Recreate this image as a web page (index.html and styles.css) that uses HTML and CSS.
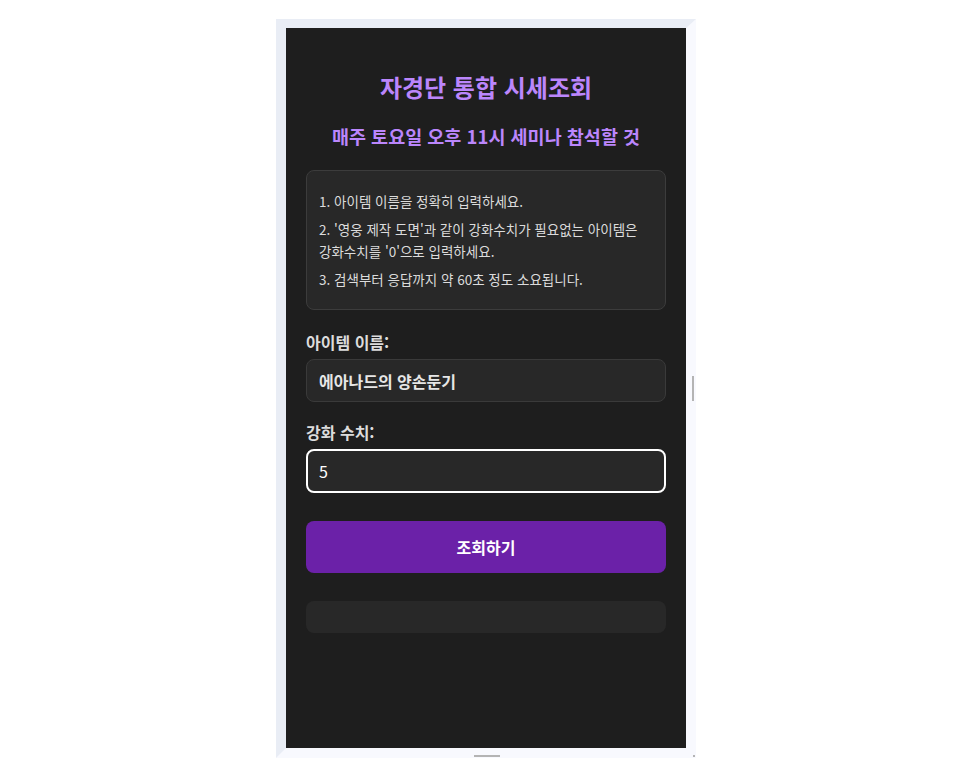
FILE: index.html
```html
<!DOCTYPE html>
<html lang="ko">
<head>
    <meta charset="UTF-8">
    <meta name="viewport" content="width=device-width, initial-scale=1.0">
    <title>자경단 통합 시세조회</title>
    <link rel="stylesheet" href="styles.css">
</head>
<body>

<div class="frame">
    <div class="app">
        <h1 class="title">자경단 통합 시세조회</h1>
        <h2 class="subtitle">매주 토요일 오후 11시 세미나 참석할 것</h2>

        <!-- 안내 문구 -->
        <div class="notice">
            <p>1. 아이템 이름을 정확히 입력하세요.</p>
            <p>2. '영웅 제작 도면'과 같이 강화수치가 필요없는 아이템은 강화수치를 '0'으로 입력하세요.</p>
            <p>3. 검색부터 응답까지 약 60초 정도 소요됩니다.</p>
        </div>

        <div class="form-group">
            <label for="item-name">아이템 이름:</label>
            <input type="text" id="item-name" class="field bold" value="에아나드의 양손둔기">
        </div>

        <div class="form-group">
            <label for="enhance">강화 수치:</label>
            <input type="text" id="enhance" class="field focused" value="5" autofocus>
        </div>

        <button class="search-btn">조회하기</button>

        <div class="result"></div>
    </div>
    <span class="handle handle-right"></span>
    <span class="handle handle-bottom"></span>
    <span class="handle handle-corner"></span>
</div>

</body>
</html>
```

FILE: styles.css
```css
body {
    font-family: "Noto Sans CJK KR", "Noto Sans", sans-serif;
    margin: 0;
    background: #fff;
}

.frame {
    position: relative;
    width: 400px;
    margin: 19px 0 0 276px;
    border-top: 9px solid #e9edf5;
    border-left: 10px solid #e9edf5;
    border-right: 10px solid #f8f9fe;
    border-bottom: 10px solid #f8f9fe;
}

.app {
    background: #1e1e1e;
    height: 720px;
    padding: 0 20px;
    box-sizing: border-box;
    overflow: hidden;
}

.title {
    margin: 0;
    padding-top: 42px;
    text-align: center;
    color: #bb86fc;
    font-size: 24px;
    line-height: 33px;
    font-weight: bold;
}

.subtitle {
    margin: 20px 0 0;
    text-align: center;
    color: #bb86fc;
    font-size: 18.5px;
    line-height: 27px;
    font-weight: bold;
}

.notice {
    margin-top: 20px;
    background: #282828;
    border: 1px solid #3c3c3c;
    border-radius: 8px;
    padding: 13px 12px 13px;
    color: #dcdcdc;
    font-size: 13.5px;
    line-height: 22px;
}

.notice p {
    margin: 6px 0;
}

.form-group {
    margin-top: 20px;
}

.form-group + .form-group {
    margin-top: 18px;
}

.form-group label {
    display: block;
    margin-bottom: 5px;
    color: #dcdcdc;
    font-size: 16px;
    line-height: 24px;
    font-weight: bold;
}

.field {
    display: block;
    width: 100%;
    box-sizing: border-box;
    height: 43px;
    padding: 0 12px;
    background: #282828;
    border: 1px solid #3a3a3a;
    border-radius: 8px;
    color: #e6e6e6;
    font-family: "Noto Sans CJK KR", "Noto Sans", sans-serif;
    font-size: 16px;
    outline: none;
}

.field.bold {
    font-weight: bold;
}

.field.focused {
    height: 44px;
    border: 2px solid #fff;
    padding: 0 11px;
    color: #fff;
    caret-color: #fff;
}

.search-btn {
    display: block;
    width: 100%;
    height: 52px;
    margin-top: 28px;
    background: #6b21a8;
    border: none;
    border-radius: 8px;
    color: #fff;
    font-family: "Noto Sans CJK KR", "Noto Sans", sans-serif;
    font-size: 16px;
    font-weight: bold;
    cursor: pointer;
}

.result {
    margin-top: 28px;
    height: 32px;
    background: #282828;
    border-radius: 8px;
}

.handle {
    position: absolute;
    background: #b4b4b4;
}

.handle-right {
    right: -8px;
    top: 348px;
    width: 2px;
    height: 25px;
}

.handle-bottom {
    bottom: -9px;
    left: 188px;
    width: 26px;
    height: 2px;
}

.handle-corner {
    right: -9px;
    bottom: -9px;
    width: 2px;
    height: 2px;
}
```
